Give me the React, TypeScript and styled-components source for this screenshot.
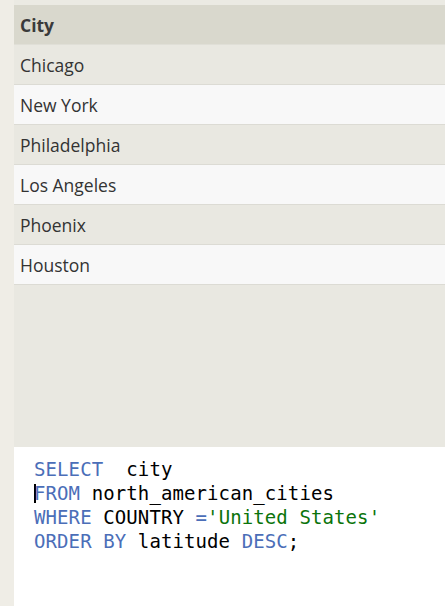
import React from "react";
import styled, { createGlobalStyle } from "styled-components";

const Global = createGlobalStyle`
  html, body { margin: 0; padding: 0; }
  body { background: #efede6; overflow: hidden; }
`;

const Page = styled.div`
  display: flex;
  height: 606px;
  width: 445px;
  background: #efede6;
`;

const LeftStrip = styled.div`
  width: 14px;
  flex: 0 0 14px;
  background: #efede6;
`;

const Main = styled.div`
  flex: 1;
  display: flex;
  flex-direction: column;
  min-width: 0;
`;

const TopStrip = styled.div`
  height: 5px;
  flex: 0 0 5px;
  background: #ebeae3;
`;

const Table = styled.div`
  display: flex;
  flex-direction: column;
  font-family: "Open Sans", "Noto Sans", sans-serif;
  font-size: 17.5px;
  color: #333;
`;

const HeaderCell = styled.div`
  height: 39px;
  border-bottom: 1px solid #e0dfd7;
  background: #d9d8cd;
  display: flex;
  align-items: center;
  padding-left: 6px;
  font-weight: 700;
  color: #3a3a3a;
`;

const Row = styled.div<{ $alt: boolean }>`
  height: 39px;
  border-bottom: 1px solid #dcdbd4;
  background: ${(p) => (p.$alt ? "#f8f8f8" : "#e9e8e1")};
  display: flex;
  align-items: center;
  padding-left: 6px;
`;

const Filler = styled.div`
  flex: 1;
  background: #e9e8e1;
`;

const Editor = styled.div`
  height: 149px;
  flex: 0 0 149px;
  background: #ffffff;
  padding: 10px 0 0 20px;
  font-family: "DejaVu Sans Mono", "Liberation Mono", monospace;
  font-size: 19px;
  letter-spacing: 0.1px;
  line-height: 24px;
  color: #000;
`;

const Line = styled.div`
  white-space: pre;
  height: 24px;
`;

const Kw = styled.span`
  color: #4b6eb8;
`;

const Str = styled.span`
  color: #0b740b;
`;

const Cursor = styled.span`
  display: inline-block;
  width: 2px;
  height: 19px;
  margin-right: -2px;
  background: #000;
  vertical-align: -3px;
`;

const cities = ["Chicago", "New York", "Philadelphia", "Los Angeles", "Phoenix", "Houston"];

export default function App() {
  return (
    <>
      <Global />
      <Page>
        <LeftStrip />
        <Main>
          <TopStrip />
          <Table>
            <HeaderCell>City</HeaderCell>
            {cities.map((c, i) => (
              <Row key={c} $alt={i % 2 === 1}>
                {c}
              </Row>
            ))}
          </Table>
          <Filler />
          <Editor>
            <Line>
              <Kw>SELECT</Kw>{"  city"}
            </Line>
            <Line>
              <Cursor />
              <Kw>FROM</Kw>{" north_american_cities"}
            </Line>
            <Line>
              <Kw>WHERE</Kw>{" COUNTRY "}<Kw>=</Kw>
              <Str>'United States'</Str>
            </Line>
            <Line>
              <Kw>ORDER BY</Kw>{" latitude "}<Kw>DESC</Kw>;
            </Line>
          </Editor>
        </Main>
      </Page>
    </>
  );
}
